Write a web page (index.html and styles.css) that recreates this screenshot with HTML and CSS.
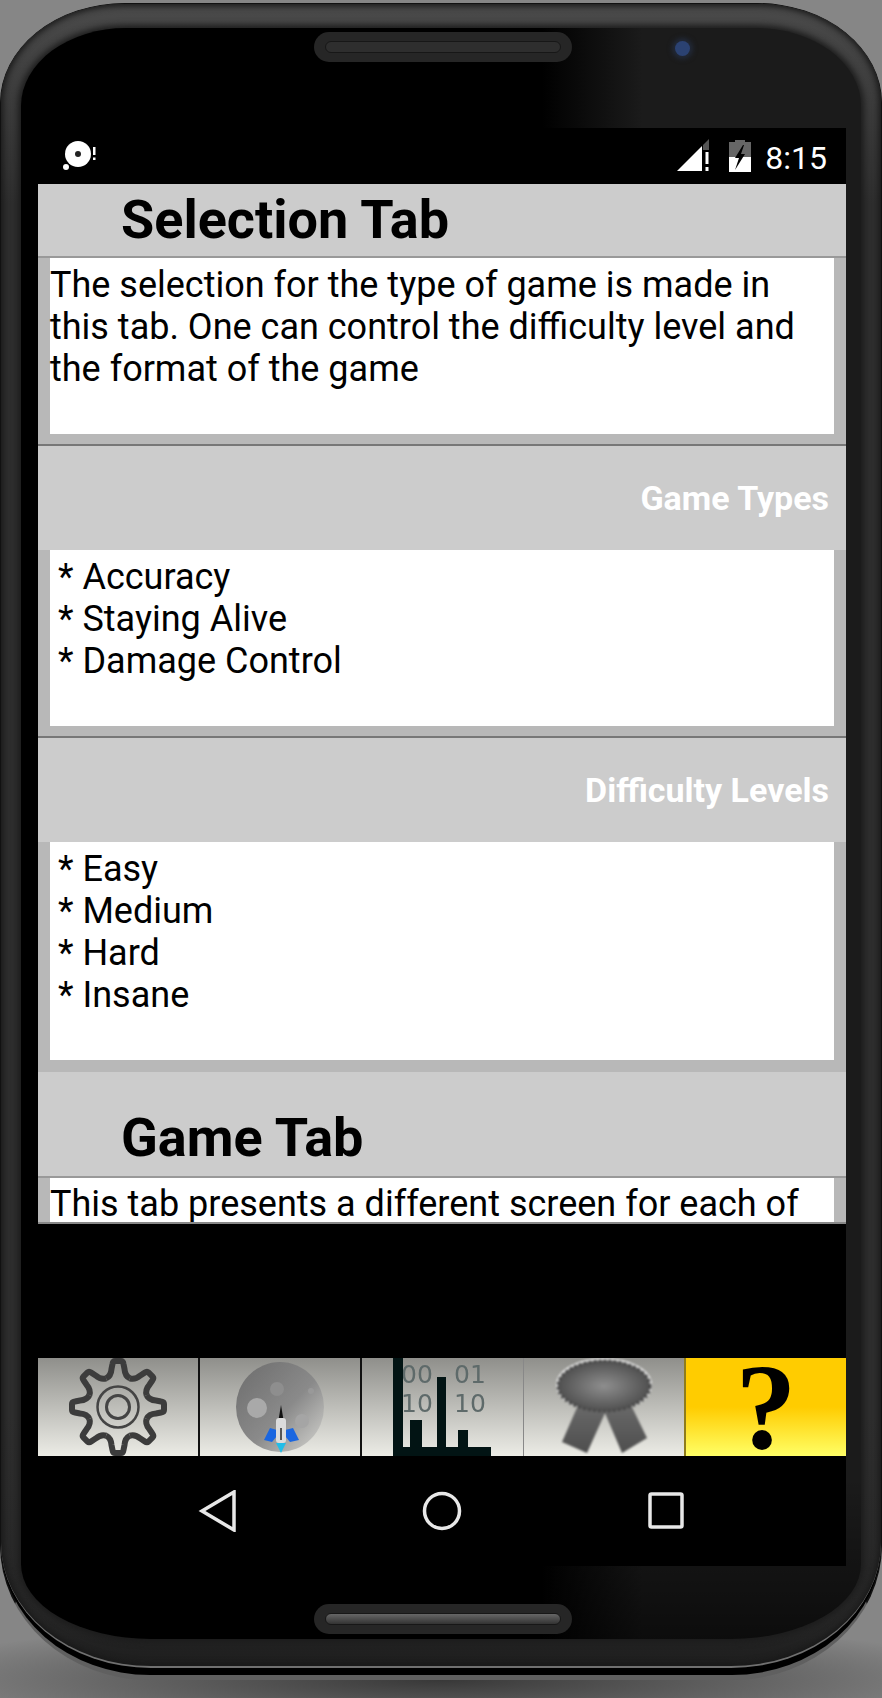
FILE: index.html

```html
<!DOCTYPE html>
<html lang="en">
<head>
    <meta charset="UTF-8">
    <meta name="viewport" content="width=device-width, initial-scale=1.0">
    <title>Help</title>
    <link rel="stylesheet" href="styles.css">
</head>
<body>

<div class="phone">
    <div class="bezel">
        <div class="face">
            <div class="face-top">
                <div class="speaker"><div class="speaker-grill"></div></div>
                <div class="camera"></div>
            </div>

            <div class="screen">
                <!-- Status bar -->
                <div class="status-bar">
                    <svg class="status-disc" width="44" height="36" viewBox="0 0 44 36">
                        <circle cx="16" cy="15" r="13" fill="#fff"/>
                        <circle cx="16" cy="15" r="3" fill="#222"/>
                        <circle cx="4" cy="28" r="3" fill="#fff"/>
                        <rect x="31" y="8" width="2.500" height="8" fill="#fff"/>
                        <rect x="31" y="18.500" width="2.500" height="2.500" fill="#fff"/>
                    </svg>
                    <svg class="status-signal" width="34" height="34" viewBox="0 0 34 34">
                        <polygon points="0,33 25,8 25,33" fill="#fff"/>
                        <polygon points="26,7 32,1 32,12 26,12" fill="#555"/>
                        <rect x="28.500" y="14" width="3" height="12" fill="#fff"/>
                        <rect x="28.500" y="29" width="3" height="4" fill="#fff"/>
                    </svg>
                    <svg class="status-battery" width="22" height="33" viewBox="0 0 22 33">
                        <path d="M6 1H16V3H22V18H0V3H6Z" fill="#666"/>
                        <rect y="18" width="22" height="15" fill="#fff"/>
                        <path d="M14 6L6 19H10L6 31L16 15H12L15 6Z" fill="#000"/>
                    </svg>
                    <span class="status-time">8:15</span>
                </div>

                <!-- Help text -->
                <div class="help">
                    <h2 class="help-title">Selection Tab</h2>
                    <div class="help-well">
                        <p class="help-box">The selection for the type of game is made in this tab. One can control the difficulty level and the format of the game<br><br></p>
                    </div>
                    <h3 class="help-sub">Game Types</h3>
                    <div class="help-well">
                        <p class="help-box help-list">* Accuracy<br>* Staying Alive<br>* Damage Control<br><br></p>
                    </div>
                    <h3 class="help-sub">Difficulty Levels</h3>
                    <div class="help-well help-well-last">
                        <p class="help-box help-list">* Easy<br>* Medium<br>* Hard<br>* Insane<br><br></p>
                    </div>
                    <h2 class="help-title help-title-next">Game Tab</h2>
                    <div class="help-well">
                        <p class="help-box help-box-cut">This tab presents a different screen for each of</p>
                    </div>
                </div>

                <div class="gap"></div>

                <!-- Tabs -->
                <div class="tabs">
                    <div class="tab">
                        <svg class="tab-icon" width="160" height="98" viewBox="0 0 160 98">
                            <defs>
                                <path id="tooth" d="M-11.900 -28.600Q-7 -31 -6.500 -38L-5.500 -43Q-5 -46 -3 -46L3 -46Q5 -46 5.500 -43L6.500 -38Q7 -31 11.900 -28.600" fill="none" stroke="#3c3c3c" stroke-width="6"/>
                            </defs>
                            <g transform="translate(80 49)">
                                <use href="#tooth"/>
                                <use href="#tooth" transform="rotate(45)"/>
                                <use href="#tooth" transform="rotate(90)"/>
                                <use href="#tooth" transform="rotate(135)"/>
                                <use href="#tooth" transform="rotate(180)"/>
                                <use href="#tooth" transform="rotate(225)"/>
                                <use href="#tooth" transform="rotate(270)"/>
                                <use href="#tooth" transform="rotate(315)"/>
                                <circle r="20.500" fill="none" stroke="#444" stroke-width="2.500"/>
                                <circle r="11.500" fill="none" stroke="#444" stroke-width="3"/>
                            </g>
                        </svg>
                    </div>
                    <div class="tab">
                        <svg class="tab-icon" width="160" height="98" viewBox="0 0 160 98">
                            <defs>
                                <linearGradient id="moon" x1="0" y1="0" x2="1" y2="1">
                                    <stop offset="0" stop-color="#6c6c6c"/>
                                    <stop offset="0.55" stop-color="#8a8a8a"/>
                                    <stop offset="1" stop-color="#d6d6d2"/>
                                </linearGradient>
                            </defs>
                            <ellipse cx="80" cy="49" rx="44" ry="45" fill="url(#moon)"/>
                            <circle cx="57" cy="50" r="10" fill="#a9a9a9"/>
                            <circle cx="77" cy="31" r="7" fill="#8e8e8e"/>
                            <circle cx="102" cy="63" r="7" fill="#a5a5a5"/>
                            <circle cx="111" cy="33" r="3" fill="#999"/>
                            <polygon points="81,47 78.500,62 83.500,62" fill="#111"/>
                            <polygon points="64,82 70,70 77,72 77,78 72,84" fill="#1a66e0"/>
                            <polygon points="99,82 93,70 85,72 85,78 90,84" fill="#1a66e0"/>
                            <rect x="76" y="60" width="10" height="25" rx="3" fill="#dcdcdc"/>
                            <rect x="80" y="70" width="2" height="12" fill="#555"/>
                            <polygon points="76,85 86,85 81,95" fill="#22bde8"/>
                        </svg>
                    </div>
                    <div class="tab">
                        <svg class="tab-icon" width="160" height="98" viewBox="0 0 160 98">
                            <g class="bits">
                                <text x="38" y="25">00</text>
                                <text x="91" y="25">01</text>
                                <text x="38" y="54">10</text>
                                <text x="91" y="54">10</text>
                            </g>
                            <path d="M30 0H40V89H47V62H59V89H74V19H83V89H95V72H105V89H128V98H30Z" fill="#021414"/>
                        </svg>
                    </div>
                    <div class="tab tab-gray">
                        <svg class="tab-icon tab-icon-soft" width="160" height="98" viewBox="0 0 160 98">
                            <defs>
                                <radialGradient id="rosette" cx="0.5" cy="0.5" r="0.6">
                                    <stop offset="0" stop-color="#8e8e8e"/>
                                    <stop offset="1" stop-color="#444"/>
                                </radialGradient>
                                <linearGradient id="ribbon" x1="0" y1="0" x2="0" y2="1">
                                    <stop offset="0" stop-color="#6a6a6a"/>
                                    <stop offset="1" stop-color="#4e4e4e"/>
                                </linearGradient>
                            </defs>
                            <ellipse cx="80" cy="27" rx="47" ry="26" fill="none" stroke="#eee" stroke-width="2"/>
                            <polygon points="55,45 38,84 63,95 81,55 98,95 123,80 106,45" fill="url(#ribbon)"/>
                            <ellipse cx="80" cy="28" rx="46" ry="25" fill="url(#rosette)" stroke="#4a4a4a" stroke-width="3" stroke-dasharray="3 2"/>
                        </svg>
                    </div>
                    <div class="tab tab-help"><span class="tab-help-mark">?</span></div>
                </div>

                <!-- Android nav -->
                <div class="nav-bar">
                    <svg width="40" height="42" viewBox="0 0 40 42"><polygon points="36,2 36,40 4,21" fill="none" stroke="#e8e8e8" stroke-width="3.500"/></svg>
                    <svg width="40" height="42" viewBox="0 0 40 42"><circle cx="20" cy="21" r="17.500" fill="none" stroke="#e8e8e8" stroke-width="3.500"/></svg>
                    <svg width="40" height="42" viewBox="0 0 40 42"><rect x="4" y="4" width="32" height="33" rx="1.500" fill="none" stroke="#e8e8e8" stroke-width="3.500"/></svg>
                </div>
            </div>

            <div class="face-bottom">
                <div class="speaker speaker-low"><div class="speaker-grill"></div></div>
            </div>
        </div>
    </div>
</div>

</body>
</html>
```

FILE: styles.css

```css
html, body {
    margin: 0;
    padding: 0;
}
body {
    width: 882px;
    height: 1698px;
    overflow: hidden;
    font-family: Roboto, "Noto Sans", sans-serif;
    background-color: #868686;
    background-image: radial-gradient(ellipse 560px 60px at 50% 1680px, #383838 0%, rgba(56, 56, 56, 0) 100%);
}

/* Phone frame */
.phone {
    box-sizing: border-box;
    width: 882px;
    height: 1677px;
    margin-top: 3px;
    background-color: #000;
    border-radius: 125px 125px 150px 150px / 100px 100px 135px 135px;
    border: 1px solid #111;
    border-bottom: 5px solid #606060;
}
.bezel {
    box-sizing: border-box;
    height: 1664px;
    padding: 24px 20px 0;
    background-image: linear-gradient(to bottom, #4a4a4a 0, #2e2e2e 12%, #2e2e2e 85%, #262626 97%, #1e1e1e 100%);
    border-radius: 122px 122px 150px 150px / 98px 98px 125px 125px;
    border-bottom: 2px solid #707070;
    box-shadow: inset 0 0 6px 2px #181818;
}
.face {
    height: 1611px;
    display: flex;
    flex-direction: column;
    background-color: #000;
    background-image: linear-gradient(to bottom, rgba(0, 0, 0, 0) 90%, rgba(0, 0, 0, 0.55) 100%), linear-gradient(to right, #000 62%, #1b1b1b 74%);
    border-radius: 105px 105px 130px 130px / 78px 78px 75px 75px;
    box-shadow: 0 0 6px 3px #1c1c1c;
}
.face-top {
    height: 100px;
    box-sizing: border-box;
    padding: 4px 0 0 293px;
    display: flex;
    align-items: flex-start;
}
.speaker {
    box-sizing: border-box;
    width: 258px;
    height: 30px;
    padding: 9px 11px;
    background-color: #262626;
    border-radius: 15px;
}
.speaker-grill {
    height: 12px;
    background-color: #2e2e2e;
    border: 1px solid #171717;
    border-radius: 6px;
    box-sizing: border-box;
}
.camera {
    width: 15px;
    height: 15px;
    margin: 9px 0 0 103px;
    background-color: #2b4272;
    border-radius: 50%;
    box-shadow: 0 0 5px 3px #222a3a;
}
.face-bottom {
    padding: 38px 0 0 293px;
}
.speaker-low .speaker-grill {
    background-image: linear-gradient(to bottom, #666, #333);
}

/* Screen */
.screen {
    width: 808px;
    height: 1438px;
    margin-left: 17px;
    display: flex;
    flex-direction: column;
    background-color: #000;
}
.status-bar {
    height: 56px;
    flex: none;
    display: flex;
    align-items: flex-end;
    padding-bottom: 12px;
    box-sizing: border-box;
    color: #fff;
}
.status-disc {
    margin: 0 0 -3px 24px;
}
.status-signal {
    margin: 0 0 0 auto;
}
.status-battery {
    margin: 0 0 0 18px;
}
.status-time {
    font-size: 32px;
    line-height: 32px;
    margin: 0 19px -2px 14px;
}

/* Help text */
.help {
    height: 1040px;
    flex: none;
    overflow: hidden;
    background-color: #ccc;
    border-bottom: 2px solid #888;
    box-sizing: border-box;
}
.help-title {
    margin: 0;
    height: 72px;
    line-height: 72px;
    padding-left: 83px;
    font-size: 54px;
    font-weight: 700;
    color: #000;
    background-color: #ccc;
    border-bottom: 2px solid #999;
}
.help-title-next {
    margin-top: 32px;
    line-height: 68px;
}
.help-sub {
    margin: 0;
    height: 104px;
    line-height: 104px;
    padding-right: 17px;
    font-size: 34px;
    font-weight: 700;
    text-align: right;
    color: #fff;
}
.help-well {
    padding: 0 12px 10px;
    background-color: #b8b8b8;
    border-bottom: 2px solid #777;
}
.help-well-last {
    padding-bottom: 12px;
    border-bottom: none;
}
.help-box {
    margin: 0;
    padding: 6px 0 2px;
    font-size: 36px;
    line-height: 42px;
    color: #000;
    background-color: #fff;
}
.help-box-cut {
    padding-top: 5px;
}
.help-list {
    padding-left: 8px;
}

.gap {
    height: 134px;
    flex: none;
}

/* Tabs */
.tabs {
    height: 98px;
    flex: none;
    display: flex;
}
.tab {
    flex: 1;
    height: 98px;
    overflow: hidden;
    display: flex;
    justify-content: center;
    background-image: linear-gradient(to bottom, #8f8f8b, #ecece6);
    border-left: 2px solid #111;
}
.tab:first-child {
    border-left: none;
}
.tab-gray {
    border-left: 1px solid #888;
}
.tab-icon {
    flex: none;
    filter: blur(0.7px);
}
.tab-icon-soft {
    filter: blur(1.2px);
}
.bits text {
    font-family: "DejaVu Sans", sans-serif;
    font-size: 25px;
    fill: #5e6a6a;
}
.tab-help {
    align-items: center;
    overflow: visible;
    background-image: linear-gradient(to bottom, #ffcc00 50%, #ffff66 100%);
    border-left: 2px solid #8f7c1c;
}
.tab-help-mark {
    font-family: "Liberation Serif", serif;
    font-size: 122px;
    font-weight: 700;
    line-height: 98px;
    color: #000;
}

/* Android nav */
.nav-bar {
    height: 110px;
    flex: none;
    display: flex;
    justify-content: center;
    align-items: center;
    gap: 184px;
}
```
